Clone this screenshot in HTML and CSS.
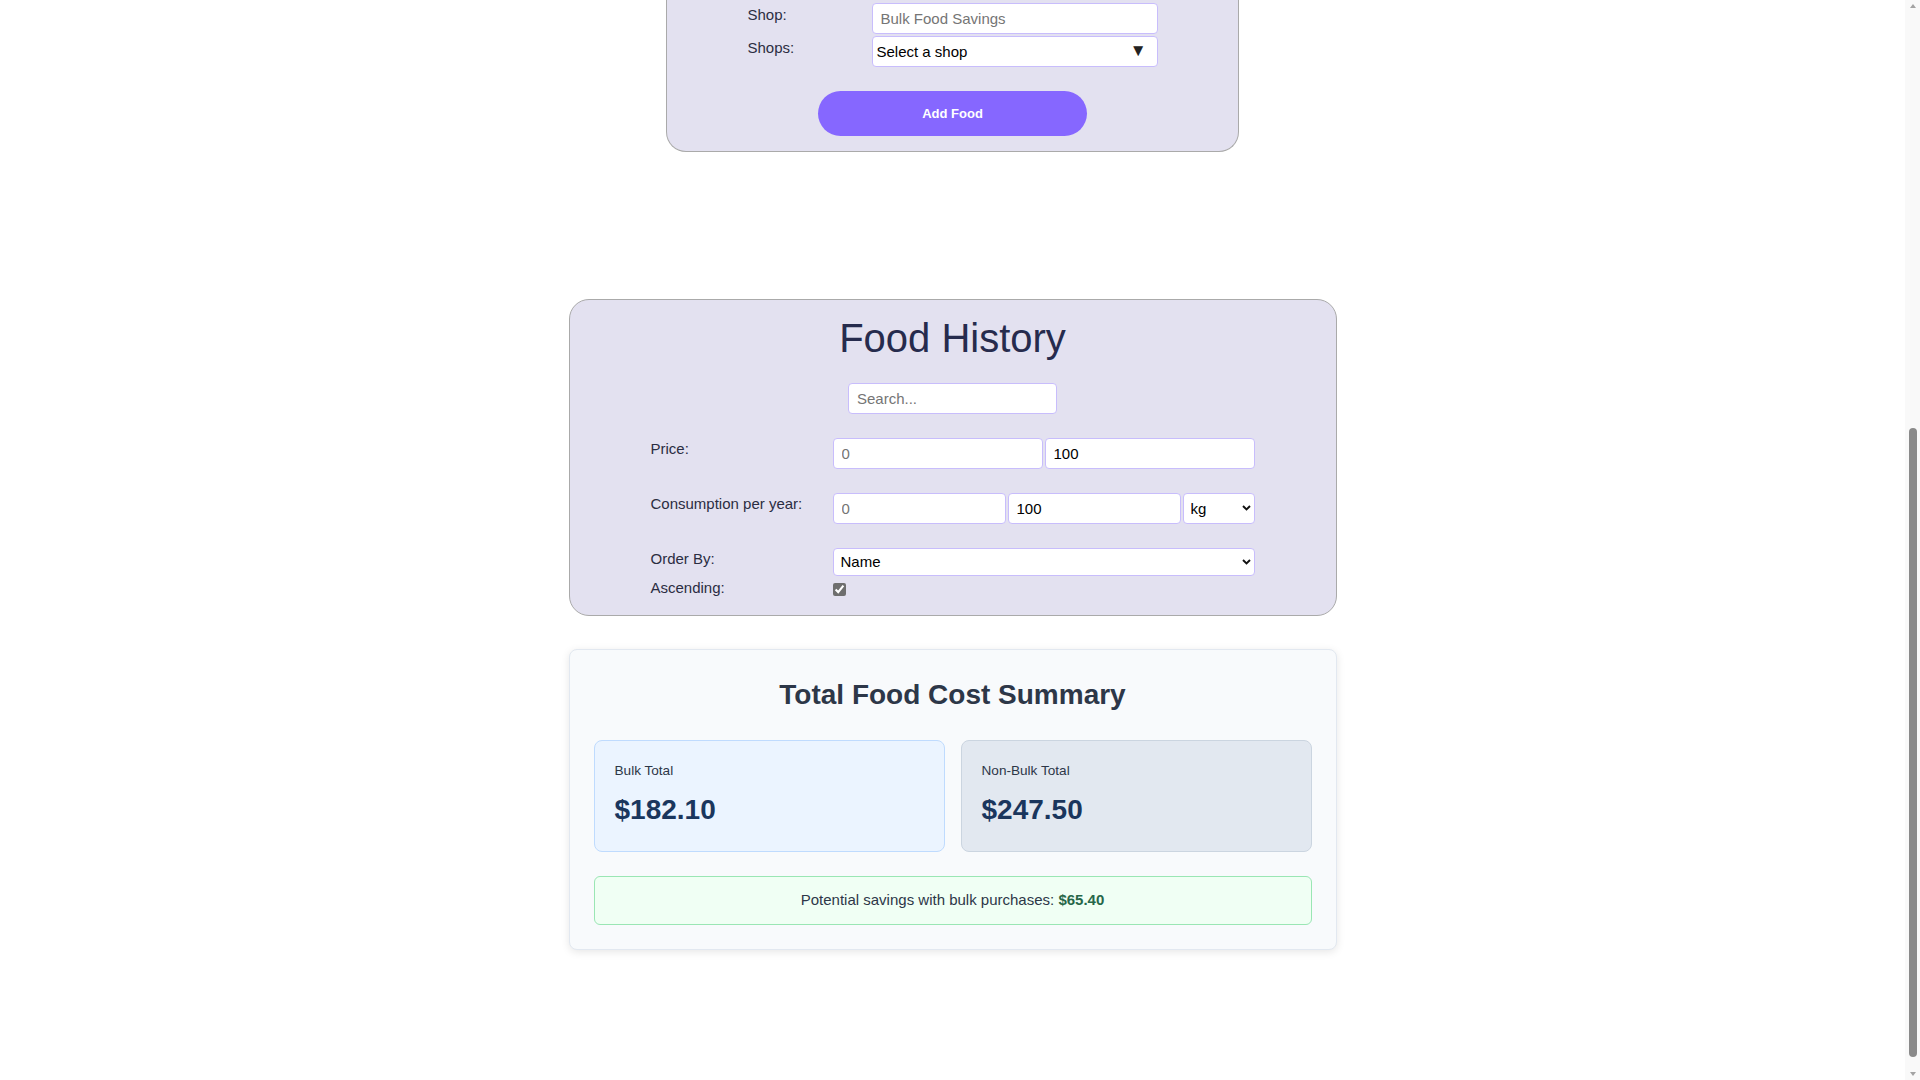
FILE: index.html
```html
<!DOCTYPE html>
<html lang="en">
<head>
<meta charset="utf-8">
<title>Bulk Food Savings</title>
<link rel="stylesheet" href="styles.css">
</head>
<body>
<main class="page">
  <section class="card add-card">
    <div class="add-grid">
      <label class="add-label">Shop:</label><input class="field" type="text" placeholder="Bulk Food Savings">
      <label class="add-label">Shops:</label><div class="fake-select"><span>Select a shop</span><span class="caret">▼</span></div>
    </div>
    <button class="add-btn" type="button">Add Food</button>
  </section>

  <section class="card history-card">
    <h2 class="history-title">Food History</h2>
    <input class="field search" type="text" placeholder="Search...">
    <div class="filters">
      <div class="filter-row">
        <label class="filter-label">Price:</label>
        <div class="filter-controls">
          <input class="field" type="text" placeholder="0">
          <input class="field" type="text" value="100">
        </div>
      </div>
      <div class="filter-row">
        <label class="filter-label">Consumption per year:</label>
        <div class="filter-controls">
          <input class="field" type="text" placeholder="0">
          <input class="field" type="text" value="100">
          <span class="select-wrap unit">
            <select class="field select unit-select"><option>kg</option><option>g</option><option>l</option></select>
            <svg class="chev" width="9" height="6" viewBox="0 0 9 6"><path d="M1 1l3.5 3.5L8 1" fill="none" stroke="#111" stroke-width="1.9"/></svg>
          </span>
        </div>
      </div>
      <div class="filter-row tight">
        <label class="filter-label">Order By:</label>
        <div class="filter-controls">
          <span class="select-wrap full">
            <select class="field select order-select"><option>Name</option><option>Price</option><option>Consumption</option></select>
            <svg class="chev" width="9" height="6" viewBox="0 0 9 6"><path d="M1 1l3.5 3.5L8 1" fill="none" stroke="#111" stroke-width="1.9"/></svg>
          </span>
        </div>
      </div>
      <div class="filter-row tight check-row">
        <label class="filter-label">Ascending:</label>
        <div class="filter-controls">
          <input type="checkbox" class="check asc" checked>
        </div>
      </div>
    </div>
  </section>

  <section class="summary">
    <h2 class="summary-title">Total Food Cost Summary</h2>
    <div class="totals">
      <div class="total bulk">
        <p class="total-label">Bulk Total</p>
        <p class="total-amount">$182.10</p>
      </div>
      <div class="total nonbulk">
        <p class="total-label">Non-Bulk Total</p>
        <p class="total-amount">$247.50</p>
      </div>
    </div>
    <p class="savings">Potential savings with bulk purchases: <strong>$65.40</strong></p>
  </section>
</main>
<aside class="scrollbar" aria-hidden="true">
  <span class="sb-arrow up"></span>
  <span class="sb-track"><span class="sb-thumb"></span></span>
  <span class="sb-arrow down"></span>
</aside>
</body>
</html>
```

FILE: styles.css
```css
* { box-sizing: border-box; }
html, body { margin: 0; }
body {
  display: flex;
  height: 100vh;
  overflow: hidden;
  font-family: "Liberation Sans", Arial, sans-serif;
  font-size: 15px;
  color: #2b2d42;
  background: #fff;
}

.page {
  flex: 1;
  min-width: 0;
  display: flex;
  flex-direction: column;
  align-items: center;
}

/* window scrollbar */
.scrollbar {
  flex: none;
  width: 15px;
  height: 100vh;
  display: flex;
  flex-direction: column;
  align-items: center;
  background: #f9f9f9;
}
.sb-arrow {
  flex: none;
  width: 0;
  height: 0;
  border-left: 3.5px solid transparent;
  border-right: 3.5px solid transparent;
}
.sb-arrow.up { margin-top: 4px; border-bottom: 4px solid #a3a3a3; }
.sb-arrow.down { margin-bottom: 4px; border-top: 4px solid #a3a3a3; }
.sb-track {
  flex: 1;
  width: 100%;
  display: flex;
  flex-direction: column;
  align-items: center;
}
.sb-thumb {
  width: 8px;
  height: 629px;
  margin-top: auto;
  margin-bottom: 15px;
  border-radius: 4px;
  background: #8a8a8a;
}

.card {
  background: #e3e1f0;
  border: 1px solid #aaa;
  border-radius: 20px;
}

.add-card {
  width: 573px;
  border-top: none;
  border-radius: 0 0 20px 20px;
  padding: 3px 80px 15px;
  display: flex;
  flex-direction: column;
  align-items: center;
}
.add-grid { display: grid; grid-template-columns: 124px 286px; row-gap: 2px; }
.add-label { padding-top: 2.5px; }

.field {
  font-family: "Liberation Sans", Arial, sans-serif;
  font-size: 15px;
  line-height: normal;
  color: #000;
  background: #fff;
  border: 1px solid #c8bdfc;
  border-radius: 4px;
  padding: 6px 8px;
  height: 31px;
  outline: none;
  margin: 0;
}
.field::placeholder { color: #757575; }

.fake-select {
  display: flex;
  justify-content: space-between;
  align-items: center;
  height: 30.5px;
  padding: 0 10px 0 4px;
  background: #fff;
  border: 1px solid #c8bdfc;
  border-radius: 4px;
  color: #000;
}
.caret { font-size: 17px; color: #222; }

.add-btn {
  margin-top: 24px;
  width: 269px;
  height: 45px;
  border: none;
  border-radius: 23px;
  background: #8667ff;
  color: #fff;
  font-family: "Liberation Sans", Arial, sans-serif;
  font-size: 13px;
  font-weight: bold;
}

.history-card {
  width: 768px;
  margin-top: 147px;
  padding: 15px 0 19px;
  display: flex;
  flex-direction: column;
  align-items: center;
}
.history-title {
  margin: 0 0 22px;
  font-size: 40px;
  font-weight: normal;
  line-height: 46px;
  color: #262b4d;
}
.search { width: 209px; margin-bottom: 24px; }

.filters { width: 604px; display: flex; flex-direction: column; }
.filter-row { display: flex; align-items: flex-start; margin-bottom: 24px; }
.filter-row.tight { margin-bottom: 0; }
.filter-row.check-row { margin-top: 1px; }
.filter-label { width: 182px; flex: none; padding-top: 2.5px; }
.filter-controls { width: 422px; display: flex; gap: 2px; }
.filter-controls > .field { flex: 1 1 0; min-width: 0; }

.select-wrap { position: relative; display: block; flex: none; }
.select-wrap.unit { width: 72px; }
.select-wrap.full { width: 422px; }
.select {
  -webkit-appearance: none;
  appearance: none;
  display: block;
  width: 100%;
  padding: 0 20px 0 7px;
}
.order-select { height: 28px; }
.chev { position: absolute; right: 4px; top: 50%; margin-top: -3px; pointer-events: none; }

.check { width: 13px; height: 13px; margin: 0; accent-color: #6e6e6e; }
.check.asc { margin-top: 6px; }

.summary {
  width: 768px;
  margin-top: 33px;
  padding: 24px;
  background: #f8fafc;
  border: 1px solid #e2e8f0;
  border-radius: 8px;
  box-shadow: 0 2px 8px rgba(0, 0, 0, 0.1);
  color: #2d3748;
}
.summary-title {
  margin: 0 0 24px;
  text-align: center;
  font-size: 28px;
  line-height: 1.5;
  font-weight: bold;
  color: #2d3748;
}
.totals { display: grid; grid-template-columns: 1fr 1fr; gap: 16px; margin-bottom: 24px; }
.total { padding: 20px; border-radius: 8px; border: 1px solid; }
.total.bulk { background: #ebf4ff; border-color: #bfdbfe; }
.total.nonbulk { background: #e2e8f0; border-color: #cbd5e0; }
.total-label { margin: 0 0 8px; font-size: 13.6px; line-height: 20px; color: #2d3748; }
.total-amount { margin: 0; font-size: 28px; line-height: 1.5; font-weight: bold; color: #1a365d; }
.savings {
  margin: 0;
  padding: 12px;
  text-align: center;
  line-height: 1.5;
  background: #f0fff4;
  border: 1px solid #9ae6b4;
  border-radius: 6px;
}
.savings strong { color: #276749; }
```
